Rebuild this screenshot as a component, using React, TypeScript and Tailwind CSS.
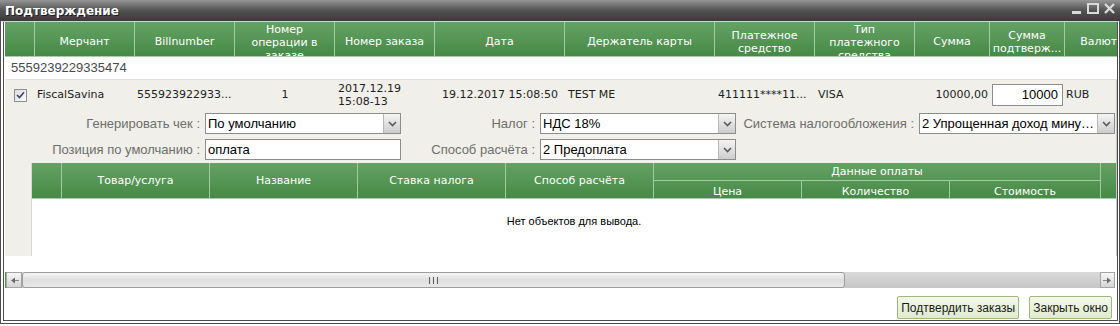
import React from 'react';

const headCols = [
  { w: 'w-[30px]', label: [''] },
  { w: 'w-[100px]', label: ['Мерчант'] },
  { w: 'w-[100px]', label: ['Billnumber'] },
  { w: 'w-[100px]', label: ['Номер', 'операции в', 'заказе'] },
  { w: 'w-[100px]', label: ['Номер заказа'] },
  { w: 'w-[130px]', label: ['Дата'] },
  { w: 'w-[150px]', label: ['Держатель карты'] },
  { w: 'w-[100px]', label: ['Платежное', 'средство'] },
  { w: 'w-[100px]', label: ['Тип', 'платежного', 'средства'] },
  { w: 'w-[75px]', label: ['Сумма'] },
  { w: 'w-[75px]', label: ['Сумма', 'подтверж...'] },
  { w: 'w-[75px]', label: ['Валюта'] },
];

const green = 'bg-gradient-to-b from-[#64a264] to-[#478947]';

function Chevron() {
  return (
    <svg width="9" height="6" viewBox="0 0 9 6">
      <path d="M1 1 L4.5 4.5 L8 1" fill="none" stroke="#5a5a5a" strokeWidth="1.6" />
    </svg>
  );
}

function Select({ value }: { value: string }) {
  return (
    <div className="h-[21px] flex border border-[#8c8c8c] bg-white">
      <div className="flex-1 min-w-0 pl-[2px] text-[13px] leading-[19px] text-black truncate font-['Liberation_Sans',sans-serif]">
        {value}
      </div>
      <div className="w-[17px] border-l border-[#b8b8b8] bg-gradient-to-b from-[#f4f4f4] to-[#cdcdcd] flex items-center justify-center">
        <Chevron />
      </div>
    </div>
  );
}

function Label({ text }: { text: string }) {
  return (
    <div className="h-[21px] pr-[5px] text-right text-[13px] leading-[21px] text-[#6e6e6e] whitespace-nowrap font-['Liberation_Sans',sans-serif]">
      {text}
    </div>
  );
}

function Checkbox() {
  return (
    <div className="w-[13px] h-[13px] border border-[#8e8f8f] bg-gradient-to-br from-[#dcdcdc] to-[#fbfbfb] flex items-center justify-center">
      <svg width="9" height="8" viewBox="0 0 9 8">
        <path d="M1 4 L3.5 6.5 L8 1.2" fill="none" stroke="#3d4a66" strokeWidth="1.7" />
      </svg>
    </div>
  );
}

function WinIcons() {
  return (
    <div className="flex items-end gap-[5px] pr-[5px] pb-[4px]">
      <svg width="10" height="10" viewBox="0 0 10 10">
        <rect x="0" y="7" width="9" height="3" fill="#d9d9d9" />
      </svg>
      <svg width="12" height="11" viewBox="0 0 12 11">
        <rect x="1" y="1" width="10" height="9" fill="none" stroke="#d9d9d9" strokeWidth="2" />
      </svg>
      <svg width="11" height="11" viewBox="0 0 11 11">
        <path d="M1 1 L10 10 M10 1 L1 10" stroke="#d9d9d9" strokeWidth="2.4" />
      </svg>
    </div>
  );
}

export default function App() {
  return (
    <div className="w-[1120px] h-[326px] bg-white overflow-hidden font-['DejaVu_Sans',sans-serif]">
      <div className="h-[21px] flex items-center justify-between bg-gradient-to-b from-[#959595] via-[#525252] to-[#3a3a3a]">
        <div className="pl-[5px] text-[12px] font-bold text-white [text-shadow:1px_1px_0_#1e1e1e]">Подтверждение</div>
        <WinIcons />
      </div>

      <div className="h-[303px] flex flex-col border-l-4 border-r-[3px] border-b-4 border-double border-[#4e4e4e] border-t border-t-[#d4d4d4]">
        <div className="pl-[1px] flex flex-col flex-1 min-h-0">
          {/* header */}
          <div className={`h-[35px] flex overflow-hidden border-b border-[#a9cca9] ${green}`}>
            {headCols.map((c, i) => (
              <div
                key={i}
                className={`${c.w} shrink-0 h-full flex flex-col items-center border-r border-[#a3cba3] text-[11px] leading-[13px] text-white text-center ${
                  c.label.length > 2 ? 'justify-start pt-[1px]' : 'justify-center pt-[5px]'
                }`}
              >
                {c.label.map((l, j) => (
                  <div key={j} className="whitespace-nowrap">{l}</div>
                ))}
              </div>
            ))}
          </div>

          {/* group row */}
          <div className="h-[23px] flex items-center pl-[6px] border-b border-[#e2e2e2] text-[13px] text-[#4a4a4a] font-['Liberation_Sans',sans-serif]">
            5559239229335474
          </div>

          {/* detail area */}
          <div className="bg-[#f0efe9] border-r border-[#c6c6c6] flex flex-col">
            <div className="h-[30px] flex items-center text-[11px] text-[#1e1e24] whitespace-nowrap">
              <div className="w-[30px] shrink-0 flex justify-center"><Checkbox /></div>
              <div className="w-[100px] shrink-0 pl-[2px]">FiscalSavina</div>
              <div className="w-[100px] shrink-0 pl-[2px]">555923922933...</div>
              <div className="w-[100px] shrink-0 text-center">1</div>
              <div className="w-[100px] shrink-0 pl-[3px] leading-[13px]">
                <div>2017.12.19</div>
                <div>15:08-13</div>
              </div>
              <div className="w-[130px] shrink-0 text-center">19.12.2017 15:08:50</div>
              <div className="w-[150px] shrink-0 pl-[3px]">TEST ME</div>
              <div className="w-[100px] shrink-0 pl-[3px]">411111****11...</div>
              <div className="w-[100px] shrink-0 pl-[3px]">VISA</div>
              <div className="w-[75px] shrink-0 text-right pr-[2px]">10000,00</div>
              <div className="w-[75px] shrink-0 pl-[2px]">
                <div className="w-[71px] h-[22px] border border-[#8c8c8c] bg-white text-right pr-[4px] text-[13px] leading-[20px] text-black font-['Liberation_Sans',sans-serif]">
                  10000
                </div>
              </div>
              <div className="flex-1 pl-[1px]">RUB</div>
            </div>

            <div className="mt-[3px] grid grid-cols-[200px_196px_139px_196px_183px_196px] gap-y-[5px]">
              <Label text="Генерировать чек :" />
              <Select value="По умолчанию" />
              <Label text="Налог :" />
              <Select value="НДС 18%" />
              <Label text="Система налогообложения :" />
              <Select value="2 Упрощенная доход минус расход" />

              <Label text="Позиция по умолчанию :" />
              <div className="h-[21px] border border-[#8c8c8c] bg-white pl-[2px] text-[13px] leading-[19px] text-black font-['Liberation_Sans',sans-serif]">
                оплата
              </div>
              <Label text="Способ расчёта :" />
              <Select value="2 Предоплата" />
            </div>

            {/* inner table */}
            <div className="mt-[3px] flex">
              <div className="w-[26px] shrink-0" />
              <div className="flex-1 flex flex-col border-l border-[#d6d6d6]">
                <div className={`h-[36px] flex border-b border-[#a9cca9] text-[11px] text-white ${green}`}>
                  <div className="w-[30px] shrink-0 border-r border-[#a3cba3]" />
                  <div className="w-[148px] shrink-0 flex items-center justify-center pt-[2px] border-r border-[#a3cba3]">Товар/услуга</div>
                  <div className="w-[148px] shrink-0 flex items-center justify-center pt-[2px] border-r border-[#a3cba3]">Название</div>
                  <div className="w-[148px] shrink-0 flex items-center justify-center pt-[2px] border-r border-[#a3cba3]">Ставка налога</div>
                  <div className="w-[148px] shrink-0 flex items-center justify-center pt-[2px] border-r border-[#a3cba3]">Способ расчёта</div>
                  <div className="w-[447px] shrink-0 flex flex-col border-r border-[#a3cba3]">
                    <div className="h-[18px] flex items-center justify-center pt-[2px] border-b border-[#a3cba3]">Данные оплаты</div>
                    <div className="flex-1 flex">
                      <div className="w-[148px] flex items-center justify-center pt-[3px] border-r border-[#a3cba3]">Цена</div>
                      <div className="w-[148px] flex items-center justify-center pt-[3px] border-r border-[#a3cba3]">Количество</div>
                      <div className="flex-1 flex items-center justify-center pt-[3px]">Стоимость</div>
                    </div>
                  </div>
                  <div className="flex-1" />
                </div>
                <div className="h-[57px] bg-white pt-[17px] text-center text-[11px] leading-[11px] text-black font-['Liberation_Sans',sans-serif]">
                  Нет объектов для вывода.
                </div>
              </div>
            </div>
          </div>

          <div className="h-[16px]" />

          {/* scrollbar */}
          <div className="h-[16px] flex border-l border-[#4f9a4f] bg-gradient-to-b from-[#dadada] to-[#c6c6c6] mr-[2px]">
            <div className="w-[16px] shrink-0 border border-[#a4a4a4] bg-gradient-to-b from-[#f7f7f7] to-[#d4d4d4] flex items-center justify-center">
              <svg width="9" height="7" viewBox="0 0 9 7">
                <path d="M1 3.5 L5 0.5 L5 6.5 Z" fill="#6a6a6a" />
                <path d="M5 3.5 L9 3.5" stroke="#8a8a8a" strokeWidth="1" />
              </svg>
            </div>
            <div className="w-[823px] shrink-0 rounded-[3px] border border-[#9c9c9c] bg-gradient-to-b from-[#f5f5f5] via-[#dedede] to-[#e9e9e9] flex items-center justify-center gap-[1px]">
              <div className="w-[1px] h-[7px] bg-[#5e5e5e]" />
              <div className="w-[1px] h-[7px] bg-[#e8e8e8]" />
              <div className="w-[1px] h-[7px] bg-[#5e5e5e]" />
              <div className="w-[1px] h-[7px] bg-[#e8e8e8]" />
              <div className="w-[1px] h-[7px] bg-[#5e5e5e]" />
            </div>
            <div className="flex-1" />
            <div className="w-[15px] shrink-0 border border-[#a4a4a4] bg-gradient-to-b from-[#f7f7f7] to-[#d4d4d4] flex items-center justify-center">
              <svg width="9" height="7" viewBox="0 0 9 7">
                <path d="M8 3.5 L4 0.5 L4 6.5 Z" fill="#6a6a6a" />
                <path d="M0 3.5 L4 3.5" stroke="#8a8a8a" strokeWidth="1" />
              </svg>
            </div>
          </div>

          {/* buttons */}
          <div className="mt-[8px] flex justify-end gap-[10px] pr-[5px]">
            <button className="h-[23px] px-[3px] rounded-[2px] border border-[#a1b77c] bg-gradient-to-b from-[#f3f9ea] to-[#dfebcc] text-[12px] text-[#1a1a1a] font-['Liberation_Sans',sans-serif]">
              Подтвердить заказы
            </button>
            <button className="h-[23px] px-[3px] rounded-[2px] border border-[#a1b77c] bg-gradient-to-b from-[#f3f9ea] to-[#dfebcc] text-[12px] text-[#1a1a1a] font-['Liberation_Sans',sans-serif]">
              Закрыть окно
            </button>
          </div>
        </div>
      </div>
    </div>
  );
}
